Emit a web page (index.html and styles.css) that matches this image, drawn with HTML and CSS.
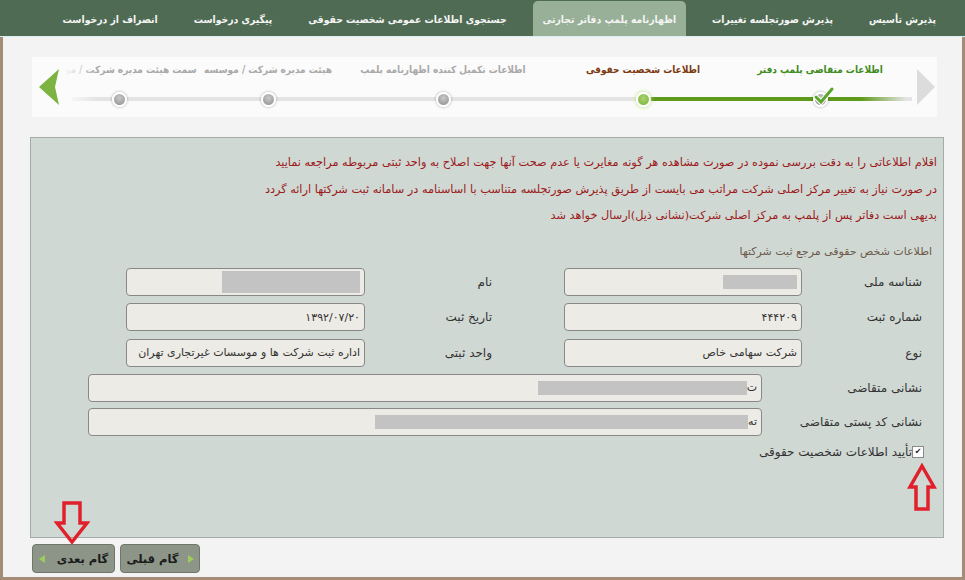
FILE: index.html
```html
<!DOCTYPE html>
<html lang="fa" dir="rtl">
<head>
    <meta charset="UTF-8">
    <title>اظهارنامه پلمپ دفاتر تجارتی</title>
    <link rel="stylesheet" href="styles.css">
</head>
<body>

<div class="page">
    <!-- top menu -->
    <nav class="tabs">
        <a class="tab">پذیرش تأسیس</a>
        <a class="tab">پذیرش صورتجلسه تغییرات</a>
        <a class="tab active">اظهارنامه پلمپ دفاتر تجارتی</a>
        <a class="tab">جستجوی اطلاعات عمومی شخصیت حقوقی</a>
        <a class="tab">پیگیری درخواست</a>
        <a class="tab">انصراف از درخواست</a>
    </nav>

    <div class="content">
        <!-- wizard steps -->
        <div class="stepper">
            <div class="step-nav step-nav-next">
                <svg width="23" height="40" viewBox="0 0 23 40"><polygon points="3,2 21,20 3,38" fill="#dcdcdc"/></svg>
            </div>
            <div class="steps">
                <div class="track"></div>
                <div class="track-done"></div>
                <div class="step done">
                    <span class="step-label">اطلاعات متقاضی پلمپ دفتر</span>
                    <span class="dot">
                        <svg class="check" width="22" height="20" viewBox="0 0 22 20"><path d="M3 11 L8 16 L19 3" fill="none" stroke="#fff" stroke-width="5" stroke-linecap="round"/><path d="M3 11 L8 16 L19 3" fill="none" stroke="#5aa52a" stroke-width="3" stroke-linecap="round"/></svg>
                    </span>
                </div>
                <div class="step current">
                    <span class="step-label">اطلاعات شخصیت حقوقی</span>
                    <span class="dot"></span>
                </div>
                <div class="step step-wide">
                    <span class="step-label">اطلاعات تکمیل کننده اظهارنامه پلمپ</span>
                    <span class="dot"></span>
                </div>
                <div class="step step-narrow">
                    <span class="step-label">هیئت مدیره شرکت / موسسه</span>
                    <span class="dot"></span>
                </div>
                <div class="step">
                    <span class="step-label">سمت هیئت مدیره شرکت / موسسه</span>
                    <span class="dot"></span>
                </div>
            </div>
            <div class="step-nav step-nav-prev">
                <svg width="24" height="40" viewBox="0 0 24 40"><polygon points="22,2 2,20 22,38 18,20" fill="#7cb342"/></svg>
            </div>
        </div>

        <!-- main form -->
        <div class="panel">
            <div class="notice">
                <p>اقلام اطلاعاتی را به دقت بررسی نموده در صورت مشاهده هر گونه مغایرت یا عدم صحت آنها جهت اصلاح به واحد ثبتی مربوطه مراجعه نمایید</p>
                <p>در صورت نیاز به تغییر مرکز اصلی شرکت مراتب می بایست از طریق پذیرش صورتجلسه متناسب با اساسنامه در سامانه ثبت شرکتها ارائه گردد</p>
                <p>بدیهی است دفاتر پس از پلمپ به مرکز اصلی شرکت(نشانی ذیل)ارسال خواهد شد</p>
            </div>

            <div class="section-title">اطلاعات شخص حقوقی مرجع ثبت شرکتها</div>

            <div class="form-grid">
                <label class="field-label">شناسه ملی</label>
                <div class="field"><span class="mask mask-id"></span></div>
                <label class="field-label field-label-2">نام</label>
                <div class="field"><span class="mask mask-name"></span></div>

                <label class="field-label">شماره ثبت</label>
                <div class="field">۴۴۴۲۰۹</div>
                <label class="field-label field-label-2">تاریخ ثبت</label>
                <div class="field">۱۳۹۲/۰۷/۲۰</div>

                <label class="field-label">نوع</label>
                <div class="field">شرکت سهامی خاص</div>
                <label class="field-label field-label-2">واحد ثبتی</label>
                <div class="field">اداره ثبت شرکت ها و موسسات غیرتجاری تهران</div>
            </div>

            <div class="form-wide">
                <label class="field-label">نشانی متقاضی</label>
                <div class="field">ت<span class="mask mask-addr"></span></div>

                <label class="field-label">نشانی کد پستی متقاضی</label>
                <div class="field">ته<span class="mask mask-post"></span></div>
            </div>

            <label class="confirm">
                <span class="checkbox">✔</span>تأیید اطلاعات شخصیت حقوقی
            </label>

            <svg class="mark mark-up" width="30" height="48" viewBox="0 0 30 48"><polygon points="15,3 27,24 21,24 21,46 9,46 9,24 3,24" fill="none" stroke="#e0202b" stroke-width="3.5" stroke-linejoin="miter"/></svg>
        </div>

        <div class="buttons">
            <button class="btn btn-prev">گام قبلی</button>
            <button class="btn btn-next">گام بعدی</button>
            <svg class="mark mark-down" width="36" height="44" viewBox="0 0 36 44"><polygon points="10,2 26,2 26,22 33,22 18,41 3,22 10,22" fill="none" stroke="#e0202b" stroke-width="3.5"/></svg>
        </div>
    </div>
</div>

</body>
</html>
```

FILE: styles.css
```css
body {
    margin: 0;
    font-family: "DejaVu Sans", sans-serif;
    font-size: 12px;
    color: #333;
    background-color: #fff;
}

.page {
    width: 965px;
    height: 580px;
    box-sizing: border-box;
    background-color: #f3f3f3;
    border-left: 3px solid #a48c76;
    border-right: 3px solid #a48c76;
    border-bottom: 3px solid #a48c76;
}

/* top menu */
.tabs {
    display: flex;
    align-items: flex-end;
    gap: 16px;
    height: 36px;
    padding: 0 19px 0 0;
    margin: 0 -3px;
    background-color: #4f6b53;
    border-bottom: 1px solid #dbeef2;
}

.tab {
    display: flex;
    align-items: center;
    height: 35px;
    padding: 0 10px;
    color: #f4f4f4;
    font-family: "DejaVu Sans Condensed", "DejaVu Sans", sans-serif;
    font-weight: bold;
    font-size: 10.3px;
    white-space: nowrap;
    border-radius: 5px 5px 0 0;
}

.tab.active {
    background-color: #98b097;
}

.content {
    padding: 20px 18px 0 27px;
}

/* wizard */
.stepper {
    position: relative;
    display: flex;
    height: 60px;
    margin: 0 7px 20px 2px;
    background-color: #fbfbfb;
}

.step-nav {
    display: flex;
    align-items: center;
}

.step-nav-next {
    width: 25px;
    flex: none;
}

.step-nav-prev {
    position: absolute;
    left: 0;
    top: 0;
    bottom: 0;
    width: 60px;
    padding-left: 5px;
    justify-content: flex-end;
    background: linear-gradient(to right, #fbfbfb 50%, rgba(251, 251, 251, 0));
}

.steps {
    position: relative;
    flex: 1;
    display: flex;
    overflow: hidden;
}

.track {
    position: absolute;
    top: 40px;
    left: 40px;
    right: 0;
    height: 4px;
    background-color: #e4e4e4;
}

.track-done {
    position: absolute;
    top: 40px;
    right: 6px;
    width: 264px;
    height: 4px;
    background: linear-gradient(to left, rgba(95, 154, 26, 0), #5f9a1a 45px);
}

.step {
    position: relative;
    flex: 0 0 178px;
    min-width: 0;
    display: flex;
    flex-direction: column;
    align-items: center;
}

.step.done {
    flex-basis: 184px;
}

.step.current {
    flex-basis: 170px;
}

.step.step-wide {
    flex-basis: 230px;
}

.step.step-narrow {
    flex-basis: 120px;
}

.step-label {
    margin-top: 5px;
    line-height: 16px;
    font-family: "DejaVu Sans Condensed", "DejaVu Sans", sans-serif;
    font-size: 10px;
    font-weight: bold;
    color: #a9a9a9;
    white-space: nowrap;
}

.step.done .step-label {
    color: #3f8c22;
}

.step.current .step-label {
    color: #7b3a12;
}

.dot {
    position: relative;
    width: 11px;
    height: 11px;
    margin-top: 14px;
    border: 2px solid #fff;
    border-radius: 50%;
    background: radial-gradient(circle at 50% 35%, #c8c8c8, #8f8f8f);
    box-shadow: 0 0 3px rgba(0, 0, 0, 0.35);
}

.step.current .dot {
    background: radial-gradient(circle at 50% 40%, #a8d36c, #7bb33c);
    box-shadow: 0 0 4px #b4e07a;
}

.check {
    position: absolute;
    left: -2px;
    top: -8px;
}

/* panel */
.panel {
    position: relative;
    height: 401px;
    box-sizing: border-box;
    background-color: #d0d8d4;
    border: 1px solid #a3aca8;
    padding: 12px 0 0 0;
}

.notice {
    padding-right: 6px;
}

.notice p {
    margin: 0;
    line-height: 26.5px;
    color: #9b1b1b;
    font-size: 11.3px;
}

.section-title {
    margin-top: 14px;
    padding-right: 11px;
    line-height: 16px;
    color: #6e5a4a;
    font-size: 11px;
}

.form-grid {
    display: grid;
    grid-template-columns: 141px 238px 199px 239px;
    grid-auto-rows: 28px;
    row-gap: 7.5px;
    margin-top: 8px;
}

.form-wide {
    display: grid;
    grid-template-columns: 181px 674px;
    grid-auto-rows: 28px;
    row-gap: 6px;
    margin-top: 7px;
}

.field-label {
    display: flex;
    align-items: center;
    padding-right: 21px;
    color: #333;
    font-size: 12px;
}

.field-label-2 {
    padding-right: 72px;
}

.field {
    display: flex;
    align-items: center;
    padding: 0 4px;
    background-color: #ecebe5;
    border: 1px solid #888;
    border-radius: 4px;
    color: #333;
    font-size: 11px;
    white-space: nowrap;
    overflow: hidden;
}

.mask {
    display: inline-block;
    height: 14px;
    background-color: #c3c3c3;
}

.mask-id {
    width: 74px;
}

.mask-name {
    width: 138px;
    height: 22px;
}

.mask-addr {
    width: 209px;
}

.mask-post {
    width: 373px;
}

.confirm {
    display: flex;
    align-items: center;
    margin-top: 9px;
    padding-right: 19px;
    font-size: 12px;
    color: #333;
}

.checkbox {
    display: inline-flex;
    align-items: center;
    justify-content: center;
    width: 10px;
    height: 10px;
    border: 1px solid #8a8a8a;
    background-color: #fff;
    font-size: 8px;
    line-height: 1;
    color: #222;
}

.mark {
    position: absolute;
}

.mark-up {
    right: 6px;
    top: 325px;
}

/* bottom buttons */
.buttons {
    position: relative;
    display: flex;
    justify-content: flex-end;
    gap: 5px;
    margin: 6px 0 0 2px;
}

.btn {
    display: flex;
    align-items: center;
    justify-content: center;
    height: 29px;
    padding: 0;
    background-color: #8d9589;
    border: 1px solid #6f776c;
    border-radius: 4px;
    font-family: "DejaVu Sans", sans-serif;
    font-size: 11.5px;
    font-weight: bold;
    color: #1b1b1b;
    white-space: nowrap;
    cursor: pointer;
}

.btn-prev {
    width: 80px;
}

.btn-next {
    width: 83px;
}

.btn-prev::before {
    content: '';
    margin-left: 9px;
    border-top: 4px solid transparent;
    border-bottom: 4px solid transparent;
    border-left: 6px solid #9ccc5a;
}

.btn-next::after {
    content: '';
    margin-right: 12px;
    border-top: 4px solid transparent;
    border-bottom: 4px solid transparent;
    border-right: 6px solid #9ccc5a;
}

.mark-down {
    left: 22px;
    top: -43px;
}
```
